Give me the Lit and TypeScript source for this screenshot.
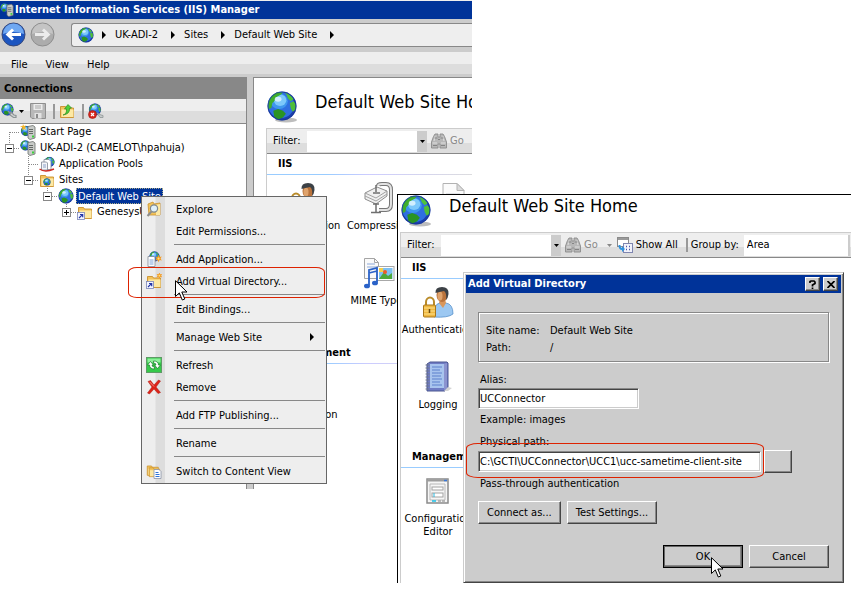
import { LitElement, html, svg, css, nothing, TemplateResult } from "lit";
import { customElement, property } from "lit/decorators.js";
import { classMap } from "lit/directives/class-map.js";

/* ---------- icon artwork, drawn on 16 or 32 unit grids ---------- */

const globeArt = (cx: number, cy: number, r: number) => svg`
  <g transform="translate(${cx} ${cy}) scale(${r / 15})">
    <circle r="15" fill="#1b3fae"/>
    <circle cx="-1" cy="-1" r="13.5" fill="#2f6fe0"/>
    <ellipse cx="-3" cy="-5" rx="9" ry="8" fill="#3f97ee"/>
    <ellipse cx="-2" cy="-6" rx="6.5" ry="6" fill="#7cc8fb"/>
    <path d="M-14 -3 Q-12 -11 -5 -14 L1 -14 L-1 -12 L-6 -9 L-8 -5 L-10 -3 L-11 2 L-14 3Z" fill="#3fae2c"/>
    <path d="M3 -14 Q9 -12 12 -7 L9 -5 L6 -8 L5 -11Z" fill="#4fc23a"/>
    <path d="M8 -3 L12 -5 L14 -2 L14 4 L11 6 L9 2Z" fill="#4fbe38"/>
    <path d="M-9 5 L-4 3 L1 5 L4 8 L1 12 L-4 14 L-8 11Z" fill="#2a9424"/>
    <ellipse cx="-4" cy="-7" rx="3.5" ry="2.5" fill="#e6f8ff" opacity=".8"/>
    <circle r="14.5" fill="none" stroke="#15308a" stroke-width="1" opacity=".6"/>
  </g>`;

const serverArt = svg`
  <path d="M8 2.5 L13 1.5 L15 3 L15 14 L10 15.5 L8 14Z" fill="#c9ccc9" stroke="#6b6f6b" stroke-width=".8"/>
  <path d="M9 5.5h4M9 7.5h4M9 9.5h4" stroke="#5a5f5a" stroke-width=".9"/>
  <rect x="12" y="11.5" width="2" height="2" fill="#3ad23a"/>`;

const folderArt = svg`
  <path d="M1.5 3.5h5l1 1.5h7v9.500h-13z" fill="#f3c35a" stroke="#c9902c" stroke-width=".9"/>
  <path d="M2.500 6.500h12v7.500h-12z" fill="#fde9a4"/>`;

const shortcutArt = svg`
  <rect x=".5" y="8.500" width="7" height="7" fill="#f4f6ff" stroke="#7a86b8" stroke-width=".8"/>
  <path d="M2 14 L5.200 10.800 M3 10.500h2.700v2.700" fill="none" stroke="#2335a8" stroke-width="1.200"/>`;

const sparkArt = svg`
  <path d="M12 0l1.200 2.600L16 2l-1.500 2.400L16 7l-2.800-.6L12 9l-1.200-2.600L8 7l1.500-2.600L8 2l2.800.6z" fill="#f59a22"/>
  <circle cx="12" cy="4.500" r="1.300" fill="#ffe27a"/>`;

const personArt = svg`
  <path d="M12 31 Q11 18 18 17 L24 17 Q31 18 31 28 Q26 32 12 31Z" fill="#9cc8f2" stroke="#5b93cc" stroke-width=".8"/>
  <path d="M17 17 L21 22 L24 17 L23 13 L18 13Z" fill="#d9975c"/>
  <ellipse cx="20" cy="9" rx="5.500" ry="7" fill="#b9733c"/>
  <ellipse cx="18" cy="10" rx="2.500" ry="4.500" fill="#dfa36c"/>
  <path d="M13.500 7 Q13 1 20 1 Q27 1 26.500 8 Q26 12 24 14 Q25 7 22 5 Q17 6 13.500 7Z" fill="#3c4146"/>`;

const binocularArt = svg`
  <path d="M2.500 3.500L4 1h3v3h2V1h3l1.500 2.500 2 5.500v6H9v-4H7v4H.5V9z" fill="#b8b8b8" stroke="#8b8b8b" stroke-width=".9"/>
  <path d="M1.500 10h4.500M10 10h4.500M4 3.500L3 8M12 3.500L13 8" stroke="#e0e0e0"/>
  <path d="M2 12.500h4M10 12.500h4M7 6.500h2M3.500 5h3M9.500 5h3" stroke="#848484"/>`;

const ART: Record<string, TemplateResult> = {
  globe: svg`${globeArt(8, 8, 7.5)}`,
  servers: svg`${globeArt(5.5, 5.5, 5)}${serverArt}`,
  start: svg`${globeArt(6, 7, 5)}<path d="M3 0l1 2 2-.5L5 3.500 6 6 4 5 2 6l.5-2.500L0 2l2.500 0z" fill="#f7b52a"/>${serverArt}`,
  pools: svg`${globeArt(10.5, 6, 5)}
    <path d="M5 3.500h5l2 2v8H5z" fill="#fff" stroke="#7f8794" stroke-width=".8"/>
    <path d="M2.500 6h5l1 1v7h-6z" fill="#f2f4f8" stroke="#7f8794" stroke-width=".8"/>
    <path d="M4 9h3M4 11h3" stroke="#8aa0c8"/>
    <path d="M.5 13 Q6 17 15 13" fill="none" stroke="#cf2b22" stroke-width="1.400"/>`,
  sites: svg`${folderArt}${globeArt(8, 10, 3.5)}`,
  vdir: svg`${folderArt}${shortcutArt}`,
  explore: svg`<path d="M2 3l5-2 1 2 6-1v12H3z" fill="#f3c35a" stroke="#c9902c" stroke-width=".8"/><path d="M10 4l4-1v11h-4z" fill="#fde9a4"/>
    <circle cx="8" cy="7.500" r="3.600" fill="#dff0fb" stroke="#7d8790" stroke-width="1.200"/>
    <path d="M5.500 10.500L1.500 15" stroke="#8d8d8d" stroke-width="2"/>`,
  addApp: svg`${globeArt(8.5, 5.5, 5)}
    <path d="M2 5.500h6l1 1v9H2z" fill="#fff" stroke="#7f8794" stroke-width=".8"/>
    <path d="M3.500 9h4M3.500 11h4M3.500 13h4" stroke="#7aa0d8"/><g transform="translate(3 4) scale(.8)">${sparkArt}</g>`,
  addVdir: svg`${folderArt}${shortcutArt}<g transform="translate(5 -.5) scale(.7)">${sparkArt}</g>`,
  refresh: svg`<rect x=".5" y=".5" width="15" height="15" fill="#35c94a" stroke="#5e9a66"/>
    <rect x="1.500" y="1.500" width="13" height="4" fill="#8df09a"/>
    <path d="M1.500 8L4.500 4.500L7.500 8H6Q6 10 8.500 10V12Q3.500 12 3.500 8ZM14.500 8L11.500 11.500L8.500 8H10Q10 6 7.500 6V4Q12.500 4 12.500 8Z" fill="#fff" stroke="#1c7a2c" stroke-width=".7"/>`,
  remove: svg`<path d="M2 2.500L4.500 1.500L8 6L12.500 1L14.500 2L10 8L14.500 13.500L12 14.500L8 10L3.500 15L1.500 14L6 8Z" fill="#dc2318" stroke="#b01810" stroke-width=".5"/>
    <path d="M3.500 2.800L8 7.500" stroke="#f78a80"/>`,
  content: svg`<g transform="scale(.85)">${folderArt}</g><g transform="translate(2 2) scale(.8)">${folderArt}</g>
    <path d="M8 6.500h5l2 2v7H8z" fill="#fff" stroke="#8a94a8" stroke-width=".8"/>
    <path d="M9.500 9.500h3M9.500 11.500h4M9.500 13.500h4" stroke="#2f74d8"/>`,
  connect: svg`${globeArt(6.5, 6.5, 6)}<path d="M7 8l3 3M10 9l3 3 2 .5v2h-2.500L9 12z" stroke="#8e9496" stroke-width="1.200" fill="#d0d4d4"/>`,
  save: svg`<path d="M.5.500h15v15H2l-1.500-1.500z" fill="#b8b8b8" stroke="#8f8f8f"/>
    <rect x="3.500" y="1" width="9" height="6" fill="#ececec"/><path d="M5 3h6M5 5h6" stroke="#a8a8a8"/>
    <rect x="4.500" y="10" width="7" height="5.500" fill="#e2e2e2"/><rect x="6" y="11" width="2" height="4" fill="#8a8a8a"/>`,
  up: svg`${folderArt}<path d="M4 12 Q8 11 7.500 6H5.500L9 1.500 12.500 5 10.500 5.500 Q11 11 4 12Z" fill="#4fd03a" stroke="#2c8a22" stroke-width=".7"/>`,
  disconnect: svg`${globeArt(7, 6.5, 6)}<path d="M9 10l4 2 2 .5v2h-3z" fill="#c8cccc" stroke="#8e9496" stroke-width=".8"/>
    <circle cx="4.500" cy="11.500" r="4" fill="#d8261c" stroke="#9c1610" stroke-width=".6"/><path d="M3 10l3 3M6 10l-3 3" stroke="#fff" stroke-width="1.200"/>`,
  find: svg`${binocularArt}`,
  showAll: svg`<rect x=".5" y=".5" width="11" height="9" fill="#fff" stroke="#8a8a8a"/><path d="M1 2h10" stroke="#9a9a9a" stroke-width="2"/>
    <rect x="6.500" y="6.500" width="9" height="9" fill="#f2f3fb" stroke="#7f86b0"/>
    <path d="M9 9.500h1M12 9.500h1M9 12.500h1M12 12.500h1" stroke="#4c56a8" stroke-width="1.500"/>
    <path d="M1.500 8 Q1.500 13 5 13v2l3-3-3-3v2Q3.500 11 3.500 8z" fill="#2f93e0"/>`,
  auth: svg`${personArt}
    <path d="M4 20v-4a4 4.500 0 0 1 8 0v4" fill="none" stroke="#b98b2a" stroke-width="2"/>
    <rect x="1.500" y="19" width="12" height="12" rx="1" fill="#f0b840" stroke="#a8761a"/>
    <path d="M2 22h11M2 25h11M2 28h11" stroke="#fbe08c"/><path d="M7.500 23v4" stroke="#6b4a10" stroke-width="1.500"/>`,
  compression: svg`
    <path d="M2 11l12-6 10 4v5l-11 8-11-5z" fill="#f0f0f0" stroke="#8d8d8d"/>
    <path d="M2 11l11 5 11-7M2 14l11 5 11-7" fill="none" stroke="#a2a2a2"/>
    <path d="M15 4 Q15 2 19 2h4q5 0 5 6V22q0 6-5 6h-7" fill="none" stroke="#777" stroke-width="4"/>
    <path d="M15 4 Q15 2 19 2h4q5 0 5 6V22q0 6-5 6h-7" fill="none" stroke="#e2e2e2" stroke-width="2"/>
    <path d="M13 3v7M10 11h7M13 22v8M10 22h6M8 30.500h10" stroke="#6f6f6f" stroke-width="1.500"/>`,
  document: svg`<path d="M5 1.500h14l7 7v22H5z" fill="#fbfbfb" stroke="#b2b2b2"/><path d="M19 1.500v7h7z" fill="#dcdcdc" stroke="#b2b2b2"/>
    <path d="M8 12h14M8 16h14M8 20h14M8 24h14" stroke="#c8ccd4"/>`,
  logging: svg`<path d="M5 3L8 1h17l1 1v25l-3 3H5z" fill="#6f7cc4" stroke="#4c5690"/>
    <path d="M8 3h14v24H8z" fill="#a8c4ee"/><path d="M10 6h10M10 9h8M10 12h10M10 15h9M10 18h10M10 21h8M10 24h10" stroke="#5c80cc"/>
    <path d="M22 3l3-1v25l-3 2z" fill="#8b93cf"/><path d="M3.500 4h4M3.500 7h4M3.500 10h4M3.500 13h4M3.500 16h4M3.500 19h4M3.500 22h4M3.500 25h4M3.500 28h4" stroke="#70788c"/>
    <path d="M26 26l4 1-4 3h-4z" fill="#d4d4d4"/>`,
  mime: svg`<path d="M1.500 1.500h10l4 4v16h-14z" fill="#fafafa" stroke="#a5a5a5"/><path d="M11.500 1.500v4h4" fill="none" stroke="#a5a5a5"/>
    <path d="M4 7h8M4 10h10" stroke="#8ca8d8"/>
    <rect x="14" y="9.500" width="17" height="14" fill="#fff" stroke="#a8a8a8"/><rect x="16" y="11" width="13.500" height="11" fill="#7dc0f2"/>
    <path d="M16 22l5-7 4 4 4-3v6z" fill="#4ca83a"/><circle cx="22" cy="15" r="2" fill="#f05a28"/><rect x="16" y="11" width="4" height="4" fill="#f4cf4a"/>
    <path d="M6 28V13l8-2v14M6 16l8-2" fill="none" stroke="#2a62c8" stroke-width="1.800"/>
    <ellipse cx="4" cy="29" rx="3" ry="2.300" fill="#2a62c8"/><ellipse cx="12" cy="26" rx="3" ry="2.300" fill="#2a62c8"/>`,
  config: svg`<rect x="5" y="4" width="21" height="24" fill="#f6f6f6" stroke="#8a8a8a" stroke-width="1.500"/>
    <path d="M5 5.500h21" stroke="#9c9c9c" stroke-width="2"/><path d="M22 5.500h3" stroke="#3a78d8" stroke-width="1.500"/>
    <path d="M8 9h15v16H8z" fill="none" stroke="#b8b8b8"/><rect x="10" y="12" width="11" height="3" fill="#fff" stroke="#a2a2a2"/>
    <rect x="10" y="18" width="11" height="4" fill="#fff" stroke="#a2a2a2"/><path d="M11 19h2M11 21h2" stroke="#28b8e0"/>
    <path d="M10 26h4" stroke="#18c0e8" stroke-width="1.500"/><path d="M16 26h3M20 26h3" stroke="#a8a8a8" stroke-width="1.500"/>`,
};

const icon = (name: string, size = 16, grid = size) => html`
  <svg class="icon" width=${size} height=${size} viewBox="0 0 ${grid} ${grid}" aria-hidden="true">${ART[name]}</svg>`;

const bigGlobe = html`
  <svg class="icon" width="31" height="32" viewBox="0 0 31 32" aria-hidden="true">
    <ellipse cx="19" cy="29" rx="11" ry="2.500" fill="#bdbdbd"/>${globeArt(15, 15, 14.5)}
  </svg>`;

const pointer = html`
  <svg class="pointer" width="13" height="21" viewBox="0 0 13 21" aria-hidden="true">
    <path d="M.5.700V16.500L4.300 12.900L7.300 20L9.800 19L6.800 12H12Z" fill="#fff" stroke="#000"/>
  </svg>`;

const triangleRight = html`<svg class="icon" width="4" height="8" viewBox="0 0 4 8" aria-hidden="true"><path d="M0 0v8l4-4z"/></svg>`;
const triangleDown = (fill = "#000") => html`
  <svg class="icon" width="5" height="3" viewBox="0 0 5 3" aria-hidden="true"><path d="M0 0h5L2.500 3z" fill=${fill}/></svg>`;

const shared = css`
  :host { display: block; font: 11px/16px "DejaVu Sans Condensed", "DejaVu Sans", sans-serif; font-stretch: condensed; color: #000; }
  *, *::before, *::after { box-sizing: border-box; }
  button, input, select { font: inherit; color: inherit; margin: 0; padding: 0; border: 0; border-radius: 0; background: none; outline: 0; }
  input { min-width: 0; }
  h1, h2, h3, p, ul, dl, dd { margin: 0; padding: 0; }
  ul { list-style: none; }
  .icon { display: block; flex: none; }
`;

/* ---------- the site home page: heading, filter bar, feature groups ---------- */

interface Feature { label: string; art: string; }
const GROUPS: { title: string; features: Feature[] }[] = [
  {
    title: "IIS",
    features: [
      { label: "Authentication", art: "auth" },
      { label: "Compression", art: "compression" },
      { label: "Default Document", art: "document" },
      { label: "Logging", art: "logging" },
      { label: "MIME Types", art: "mime" },
    ],
  },
  { title: "Management", features: [{ label: "Configuration Editor", art: "config" }] },
];

@customElement("site-home")
class SiteHome extends LitElement {
  static styles = [shared, css`
    :host { background: #fff; overflow: hidden; }
    .head { display: flex; gap: 17px; height: 37px; padding-left: 1px; }
    h1 { font-size: 18px; font-weight: 400; line-height: 22px; white-space: nowrap; }
    .frame { border-left: 1px solid #ccc; padding-bottom: 40px; }
    .bar { display: flex; align-items: center; height: 26px; padding: 0 1px 0 6px; white-space: nowrap;
      border-top: 1px solid #ccc; border-bottom: 1px solid #888; background: linear-gradient(#eee 60%, #ddd 60%); }
    .bar > label { flex: none; width: 34px; }
    .combo { display: flex; flex: none; width: 120px; height: 21px; background: #fff; margin-right: 4px; }
    .combo input { flex: 1; padding: 0 2px; }
    .combo button { display: grid; place-items: center; width: 10px; background: #ccc; }
    .tool { display: flex; flex: none; align-items: center; gap: 3px; }
    .tool.off { color: #888; margin-right: 9px; }
    .drop { flex: none; width: 5px; margin-right: 5px; }
    .bar > .group { width: 58px; margin-left: 8px; padding-left: 3px; border-left: 2px solid #999; line-height: 14px; }
    select { flex: 1; min-width: 40px; height: 21px; padding-left: 3px; appearance: none; background: #fff; border-right: 2px solid #ccc; }
    section + section { margin-top: 18px; }
    h2 { height: 21px; padding: 2px 0 0 11px; font-size: 11px; font-weight: 700; line-height: 16px;
      background: linear-gradient(90deg, #9cf 0 60px, #ccf 100px, #ddd 210px, #fff 280px) left bottom / 100% 1px no-repeat; }
    ul { display: grid; grid-template-columns: repeat(3, 74px); column-gap: 1px; grid-auto-rows: 75px; }
    li { display: flex; flex-direction: column; align-items: center; gap: 5px; padding-top: 7px; text-align: center; line-height: 13px; }
  `];

  render() {
    return html`
      <div class="head">${bigGlobe}<h1>Default Web Site Home</h1></div>
      <div class="frame">
        <div class="bar">
          <label for="filter">Filter:</label>
          <div class="combo"><input id="filter" type="text"><button aria-label="Filter history">${triangleDown()}</button></div>
          <button class="tool off" disabled>${icon("find")}Go</button>
          <button class="drop" aria-label="Go options">${triangleDown("#888")}</button>
          <button class="tool">${icon("showAll")}Show All</button>
          <label class="group" for="group">Group by:</label>
          <select id="group"><option>Area</option></select>
        </div>
        ${GROUPS.map((g) => html`
          <section>
            <h2>${g.title}</h2>
            <ul>${g.features.map((f) => html`<li>${icon(f.art, 32)}<span>${f.label}</span></li>`)}</ul>
          </section>`)}
      </div>`;
  }
}

/* ---------- context menu ---------- */

interface Entry { label: string; art?: string; sub?: boolean; marked?: boolean; }
const MENU: Entry[][] = [
  [{ label: "Explore", art: "explore" }, { label: "Edit Permissions..." }],
  [{ label: "Add Application...", art: "addApp" }, { label: "Add Virtual Directory...", art: "addVdir", marked: true }],
  [{ label: "Edit Bindings..." }],
  [{ label: "Manage Web Site", sub: true }],
  [{ label: "Refresh", art: "refresh" }, { label: "Remove", art: "remove" }],
  [{ label: "Add FTP Publishing..." }],
  [{ label: "Rename" }],
  [{ label: "Switch to Content View", art: "content" }],
];

@customElement("context-menu")
class ContextMenu extends LitElement {
  static styles = [shared, css`
    :host { width: 186px; padding: 1px; border: 1px solid #666;
      background: linear-gradient(90deg, #eee 13px, #ddd 14px, #ddd 23px, #eee 23px); }
    .set + .set::before { content: ""; display: block; height: 1px; margin: 2px 0 3px 31px; background: #888; }
    .item { position: relative; display: flex; align-items: center; height: 22px; padding: 0 11px 0 3px; }
    button { flex: 1; display: grid; grid-template-columns: 16px 1fr auto; column-gap: 14px; align-items: center; height: 22px; text-align: left; white-space: nowrap; }
    button span { padding-top: 2px; }
    .mark { position: absolute; inset: -3px 0 -6px -15px; border: 1px solid #dd2200; border-radius: 9px / 5px; pointer-events: none; }
    .pointer { position: absolute; left: 32px; top: 10px; }
  `];

  render() {
    return html`${MENU.map((set) => html`
      <div class="set">${set.map((e) => html`
        <div class="item">
          <button>${e.art ? icon(e.art) : html`<span></span>`}<span>${e.label}</span>${e.sub ? triangleRight : nothing}</button>
          ${e.marked ? html`<span class="mark"></span>${pointer}` : nothing}
        </div>`)}</div>`)}`;
  }
}

/* ---------- dialog ---------- */

@customElement("virtual-directory-dialog")
class VirtualDirectoryDialog extends LitElement {
  static styles = [shared, css`
    :host { padding: 2px; background: #ccc; border: 1px solid; border-color: #ccc #444 #444 #ccc;
      box-shadow: inset 1px 1px #fff, inset -1px -1px #888; }
    header { display: flex; align-items: center; gap: 3px; height: 18px; padding: 0 3px 0 2px; background: #039; color: #fff; }
    h2 { flex: 1; font-size: 11px; font-weight: 700; line-height: 18px; }
    .raised { background: #ccc; border: 1px solid; border-color: #fff #444 #444 #fff; box-shadow: inset -1px -1px #888; }
    header .raised { display: grid; place-items: center; width: 15px; height: 14px; }
    .body { padding: 19px 12px 12px; }
    dl { display: grid; grid-template-columns: 64px 1fr; align-content: center; height: 50px; padding: 3px 7px 0;
      border: 1px solid #888; box-shadow: inset 1px 1px #fff, 1px 1px #fff; line-height: 17px; }
    dt, dd { margin: 0; }
    .caption, .hint { display: block; padding-left: 2px; }
    .caption { margin-top: 6px; }
    dl + .caption { margin-top: 10px; }
    .hint { margin-top: 3px; }
    .field { position: relative; }
    .field input { display: block; width: 100%; height: 21px; padding: 0 1px; background: #fff;
      border: 1px solid; border-color: #888 #fff #fff #888; box-shadow: inset 1px 1px #444, inset -1px -1px #ccc; }
    .alias { width: 161px; }
    .row { display: flex; align-items: center; gap: 3px; padding-right: 37px; }
    .row .field { flex: 1; }
    .browse { width: 28px; height: 23px; }
    .mark { position: absolute; inset: -8px -3px -6px -12px; border: 1px solid #dd2200; border-radius: 12px / 5px; pointer-events: none; }
    .actions { display: flex; gap: 6px; margin-top: 9px; }
    .actions .raised { height: 23px; padding: 0 8px; }
    .actions.end { justify-content: flex-end; margin-top: 21px; }
    .actions.end .raised { position: relative; width: 80px; }
    .raised.ok { border-color: #000; box-shadow: inset 0 0 0 1px #666, inset -1px -1px 0 1px #888; }
    .pointer { position: absolute; left: 47px; top: 11px; }
  `];

  render() {
    return html`
      <header>
        <h2>Add Virtual Directory</h2>
        <button class="raised" aria-label="Help"><svg class="icon" width="7" height="9" viewBox="0 0 7 9"><path d="M1 3V1.500L2 1h3l1 1v1.500L3.500 5v1.500M3.500 7.500V9" fill="none" stroke="#000" stroke-width="1.700"/></svg></button>
        <button class="raised" aria-label="Close"><svg class="icon" width="8" height="7" viewBox="0 0 8 7"><path d="M.5 0l7 7M7.500 0l-7 7" stroke="#000" stroke-width="1.700"/></svg></button>
      </header>
      <div class="body">
        <dl><dt>Site name:</dt><dd>Default Web Site</dd><dt>Path:</dt><dd>/</dd></dl>
        <label class="caption" for="alias">Alias:</label>
        <div class="field alias"><input id="alias" type="text" value="UCConnector"></div>
        <p class="hint">Example: images</p>
        <label class="caption" for="path">Physical path:</label>
        <div class="row">
          <div class="field"><input id="path" type="text" value="C:\\GCTI\\UCConnector\\UCC1\\ucc-sametime-client-site"><span class="mark"></span></div>
          <button class="raised browse" aria-label="Browse"></button>
        </div>
        <p class="hint">Pass-through authentication</p>
        <div class="actions"><button class="raised">Connect as...</button><button class="raised">Test Settings...</button></div>
        <div class="actions end"><button class="raised ok">OK${pointer}</button><button class="raised">Cancel</button></div>
      </div>`;
  }
}

/* ---------- desktop with both windows ---------- */

interface Node { label: string; art: string; level: number; line: "top" | "bottom" | "full"; toggle?: "-" | "+"; selected?: boolean; }
const TREE: Node[] = [
  { label: "Start Page", art: "start", level: 0, line: "bottom" },
  { label: "UK-ADI-2 (CAMELOT\\hpahuja)", art: "servers", level: 0, line: "top", toggle: "-" },
  { label: "Application Pools", art: "pools", level: 1, line: "full" },
  { label: "Sites", art: "sites", level: 1, line: "top", toggle: "-" },
  { label: "Default Web Site", art: "globe", level: 2, line: "top", toggle: "-", selected: true },
  { label: "GenesysU", art: "vdir", level: 3, line: "top", toggle: "+" },
];
const SPAN = { top: "M4.500 0V8", bottom: "M4.500 8V16", full: "M4.500 0V16" };

@customElement("app-root")
class AppRoot extends LitElement {
  @property({ type: Array }) crumbs = ["UK-ADI-2", "Sites", "Default Web Site"];

  static styles = [shared, css`
    :host { position: relative; min-height: 100vh; background: #fff; overflow: hidden; }
    .manager { position: absolute; left: 0; right: 387px; top: 0; background: #ccc; border-top: 1px solid #eee; }
    .title { display: flex; align-items: center; height: 18px; background: #039; color: #fff; gap: 1px; overflow: hidden; }
    .title h1 { font-size: 11px; font-weight: 700; line-height: 18px; white-space: nowrap; }
    .title .icon { width: 14px; }
    .nav { display: flex; align-items: center; gap: 4px; height: 33px; padding: 0 0 2px 1px; }
    .nav > button { flex: none; }
    .address { display: flex; flex: 1; align-items: center; height: 24px; margin-left: 12px; padding-left: 6px;
      background: #eee; border: 1px solid #888; border-right: 0; border-radius: 3px 0 0 3px; white-space: nowrap; overflow: hidden; }
    .address a { margin: 0 13px 0 9px; padding-top: 1px; color: inherit; text-decoration: none; }
    .address .icon:first-child { margin-right: 8px; }
    .menubar { display: flex; gap: 18px; height: 25px; padding: 0 11px 3px; border-bottom: 3px solid #ccc; background: linear-gradient(#eee 12px, #ddd 12px); }
    .menubar button { height: 25px; padding-top: 1px; }
    .split { display: grid; grid-template-columns: 247px minmax(0, 1fr); column-gap: 6px; }
    .side { display: flex; flex-direction: column; background: #fff; border-right: 1px solid #888; }
    .side h2 { height: 22px; padding: 0 4px; font-size: 11px; line-height: 24px; background: #888; }
    .tools { display: flex; align-items: center; height: 25px; padding-left: 1px; border-bottom: 1px solid #888; background: linear-gradient(#eee 12px, #ddd 12px); }
    .tools button { display: flex; align-items: center; gap: 2px; }
    .tools .save { margin-left: 6px; }
    .tools .sep { width: 2px; height: 15px; margin: 0 4px 0 7px; background: #999; }
    .tree { padding-left: 5px; }
    .tree li { display: flex; height: 16px; align-items: center; white-space: nowrap; }
    .tree li > button, .tree li > span { flex: none; width: 15px; height: 16px; }
    .tree a { margin-left: 2px; padding: 0 2px; line-height: 18px; color: inherit; text-decoration: none; }
    .tree a.selected { height: 16px; line-height: 17px; background: #039; color: #fff; outline: 1px dotted #aa8; outline-offset: -1px; }
    .level1 { padding-left: 19px; }
    .level2 { padding-left: 38px; }
    .level3 { padding-left: 57px; }
    .main { padding: 13px 0 10px 12px; background: #fff; border-top: 1px solid #888; border-left: 1px solid #888; }
    context-menu { position: absolute; left: 141px; top: 195px; }
    .second { position: absolute; left: 397px; right: 8px; top: 194px; background: #fff; border: 1px solid #000; border-width: 1px 0 0 1px; }
    .second site-home { padding-left: 2px; }
    virtual-directory-dialog { position: absolute; left: 65px; right: 7px; top: 77px; }
  `];

  private arrow(fill: string, edge: string, shine: string, ink: string, flip = false) {
    return html`<svg class="icon" width="25" height="25" viewBox="0 0 25 25" aria-hidden="true">
      <circle cx="12.500" cy="12.500" r="11.500" fill=${fill} stroke=${edge}/>
      <path d="M2 12a10.500 10.500 0 0 1 21 0Q12 8 2 12Z" fill=${shine}/>
      <path d="M4.500 12.500L11 6.500l2 2-2.500 2.500H20v3h-9.500L13 16.500l-2 2z" fill=${ink} transform=${flip ? "rotate(180 12.500 12.500)" : nothing}/></svg>`;
  }

  private node(n: Node) {
    const joint = html`<svg class="icon" width="15" height="16" viewBox="0 0 15 16" aria-hidden="true">
      <path d=${SPAN[n.line]} stroke="#888" stroke-dasharray="1 1"/><path d="M5 8.500H15" stroke="#888" stroke-dasharray="1 1"/>
      ${n.toggle ? svg`<rect x=".5" y="4.500" width="8" height="8" fill="#fff" stroke="#888"/><path d="M2 8.500h5" stroke="#000"/>` : nothing}
      ${n.toggle === "+" ? svg`<path d="M4.500 6v5" stroke="#000"/>` : nothing}</svg>`;
    return html`<li class="level${n.level}">
      ${n.toggle ? html`<button aria-label="Toggle ${n.label}">${joint}</button>` : html`<span>${joint}</span>`}
      ${icon(n.art)}<a href="#" class=${classMap({ selected: !!n.selected })}>${n.label}</a></li>`;
  }

  render() {
    return html`
      <div class="manager">
        <div class="title">${icon("servers")}<h1>Internet Information Services (IIS) Manager</h1></div>
        <div class="nav">
          <button aria-label="Back">${this.arrow("#1c55c0", "#3a4a78", "#6fa8f2", "#fff")}</button>
          <button aria-label="Forward">${this.arrow("#acacac", "#8e8e8e", "#c4c4c4", "#ececec", true)}</button>
          <nav class="address" aria-label="Address">${icon("globe")}${triangleRight}
            ${this.crumbs.map((c) => html`<a href="#">${c}</a>${triangleRight}`)}
          </nav>
        </div>
        <div class="menubar"><button>File</button><button>View</button><button>Help</button></div>
        <div class="split">
          <div class="side">
            <h2>Connections</h2>
            <div class="tools">
              <button aria-label="Connect">${icon("connect")}${triangleDown()}</button>
              <button class="save" aria-label="Save">${icon("save")}</button><span class="sep"></span>
              <button aria-label="Up">${icon("up")}</button><span class="sep"></span>
              <button aria-label="Disconnect">${icon("disconnect")}</button>
            </div>
            <ul class="tree">${TREE.map((n) => this.node(n))}</ul>
          </div>
          <div class="main"><site-home></site-home></div>
        </div>
        <context-menu></context-menu>
      </div>
      <div class="second">
        <site-home></site-home>
        <virtual-directory-dialog></virtual-directory-dialog>
      </div>`;
  }
}
